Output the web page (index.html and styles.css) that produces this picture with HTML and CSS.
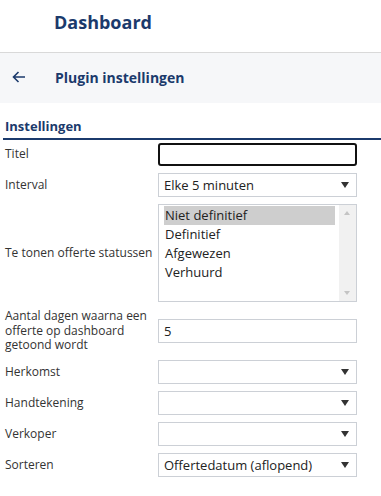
FILE: index.html
```html
<!DOCTYPE html>
<html lang="nl">
<head>
<meta charset="utf-8">
<link rel="stylesheet" href="styles.css">
</head>
<body>
<header class="topbar">
  <h1 class="title">Dashboard</h1>
</header>
<nav class="subbar">
  <svg class="back" width="14" height="12" viewBox="0 0 14 12"><path d="M13 6H1.5M6.5 1L1.5 6l5 5" fill="none" stroke="#1b3a6c" stroke-width="1.6"/></svg>
  <span class="subtitle">Plugin instellingen</span>
</nav>
<section class="panel">
  <h2 class="section-title">Instellingen</h2>
  <div class="form">
    <label class="lbl">Titel</label>
    <div class="ctl"><div class="input focus"></div></div>

    <label class="lbl">Interval</label>
    <div class="ctl"><div class="select"><span>Elke 5 minuten</span><i class="caret"></i></div></div>

    <label class="lbl">Te tonen offerte statussen</label>
    <div class="ctl">
      <div class="listbox">
        <div class="options">
          <div class="opt sel">Niet definitief</div>
          <div class="opt">Definitief</div>
          <div class="opt">Afgewezen</div>
          <div class="opt">Verhuurd</div>
        </div>
        <div class="scroll"><i class="up"></i><i class="down"></i></div>
      </div>
    </div>

    <label class="lbl">Aantal dagen waarna een offerte op dashboard getoond wordt</label>
    <div class="ctl"><div class="input">5</div></div>

    <label class="lbl">Herkomst</label>
    <div class="ctl"><div class="select"><span></span><i class="caret"></i></div></div>

    <label class="lbl">Handtekening</label>
    <div class="ctl"><div class="select"><span></span><i class="caret"></i></div></div>

    <label class="lbl">Verkoper</label>
    <div class="ctl"><div class="select"><span></span><i class="caret"></i></div></div>

    <label class="lbl">Sorteren</label>
    <div class="ctl"><div class="select"><span>Offertedatum (aflopend)</span><i class="caret"></i></div></div>
  </div>
</section>
</body>
</html>
```
FILE: styles.css
```css
* { box-sizing: border-box; }
body {
  margin: 0;
  background: #fff;
  font-family: "Open Sans", "Noto Sans", sans-serif;
  color: #333;
}
.topbar {
  height: 53px;
  border-bottom: 1px solid #d9d9d9;
  padding: 10px 0 0 54px;
}
.title {
  margin: 0;
  font-size: 18px;
  font-weight: 700;
  color: #1b3a6c;
  line-height: 24px;
}
.subbar {
  height: 50px;
  background: #f6f7f9;
  display: flex;
  align-items: center;
  padding-left: 12px;
}
.back { margin-right: 29px; margin-top: -2px; }
.subtitle {
  font-size: 14px;
  font-weight: 700;
  color: #1b3a6c;
  margin-top: -2px;
}
.panel { padding: 14px 0 0 3px; }
.section-title {
  margin: 0;
  font-size: 13px;
  font-weight: 700;
  color: #1b3a6c;
  line-height: 18px;
  padding: 0 0 3px 2px;
  border-bottom: 2px solid #1b3a6c;
}
.form {
  display: grid;
  grid-template-columns: 153px 199px;
  row-gap: 7px;
  align-items: center;
  padding: 3px 0 0 2px;
}
.lbl {
  font-size: 12px;
  line-height: 14.7px;
  color: #333;
  padding-right: 1px;
}
.input, .select {
  height: 24px;
  border: 1px solid #ccd0d6;
  font-size: 13px;
  line-height: 22px;
  padding: 0 6px 0 5px;
  color: #222;
  background: #fff;
}
.input.focus {
  height: 23px;
  border: 2px solid #111;
  border-radius: 3px;
}
.select {
  display: flex;
  justify-content: space-between;
  align-items: center;
}
.caret {
  width: 0; height: 0;
  border-left: 4.5px solid transparent;
  border-right: 4.5px solid transparent;
  border-top: 6px solid #333;
  margin-right: 1px;
}
.listbox {
  height: 98px;
  border: 1px solid #ccd0d6;
  display: flex;
}
.options { flex: 1; padding: 1px 4px 0 5px; }
.opt {
  font-size: 13px;
  line-height: 19px;
  color: #222;
  padding-left: 1px;
}
.opt.sel { background: #cecece; }
.scroll {
  width: 17px;
  background: #f1f1f1;
  position: relative;
}
.up, .down {
  position: absolute;
  left: 5px;
  width: 0; height: 0;
  border-left: 3.5px solid transparent;
  border-right: 3.5px solid transparent;
}
.up { top: 6px; border-bottom: 4px solid #c4c4c4; }
.down { bottom: 6px; border-top: 4px solid #c4c4c4; }
```
